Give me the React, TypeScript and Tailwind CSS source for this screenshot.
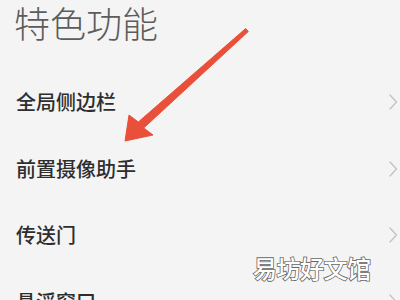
const items = ["全局侧边栏", "前置摄像助手", "传送门", "悬浮窗口"];

function Chevron() {
  return (
    <svg width="10" height="16" viewBox="0 0 10 16" className="shrink-0">
      <polyline points="2,1 8.5,8 2,15" fill="none" stroke="#c2c2c2" strokeWidth="1.3" strokeLinecap="round" strokeLinejoin="round" />
    </svg>
  );
}

export default function App() {
  return (
    <div className="relative h-[300px] w-[400px] overflow-hidden bg-[#f4f4f4] font-['Noto_Sans_CJK_SC',sans-serif]">
      <div className="pl-[14px] text-[36px] font-light leading-[45px] text-[#5c5c5c]">
        特色功能
      </div>

      <div className="mt-[24px] flex flex-col">
        {items.map((label) => (
          <div key={label} className="flex h-[66.5px] items-center justify-between pl-[16px] pr-[2px]">
            <span className="text-[20px] font-medium leading-none text-[#2e2e2e]">{label}</span>
            <Chevron />
          </div>
        ))}
      </div>

      {/* red annotation arrow */}
      <svg className="pointer-events-none absolute inset-0" width="400" height="300" viewBox="0 0 400 300">
        <polygon
          points="245.7,28.5 248.3,31.5 143.7,128 153,135 125,141 129,115 138.3,122"
          fill="#ea5039"
          stroke="#ea5039"
          strokeWidth="1"
          strokeLinejoin="round"
        />
      </svg>

      {/* watermark */}
      <div className="absolute left-[253px] top-[254px] text-[24px] font-medium leading-[28px] tracking-[-0.5px] text-white [-webkit-text-stroke:1.6px_#666] [paint-order:stroke_fill]">
        易坊好文馆
      </div>
    </div>
  );
}
